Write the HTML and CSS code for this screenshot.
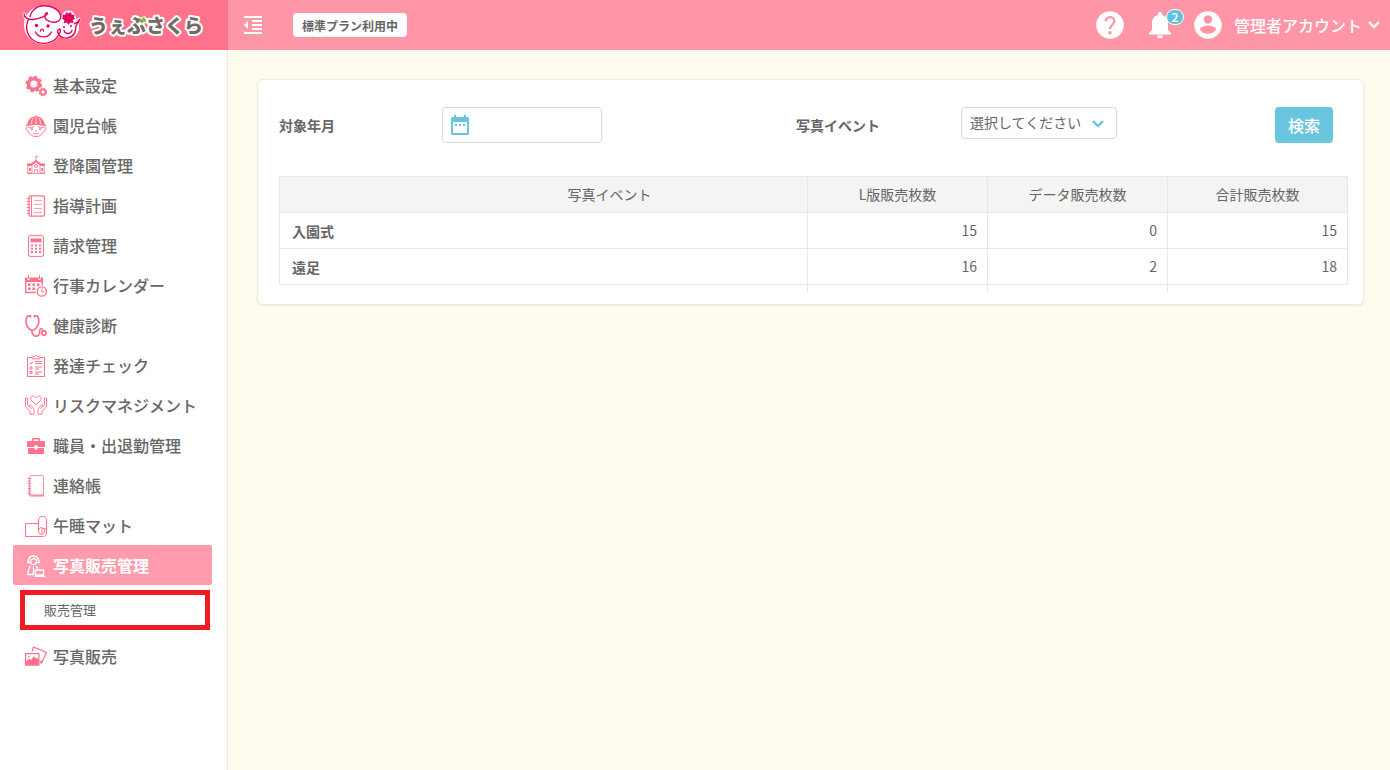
FILE: index.html
```html
<!DOCTYPE html>
<html lang="ja">
<head>
<meta charset="utf-8">
<meta name="viewport" content="width=device-width, initial-scale=1">
<title>販売管理 | うぇぶさくら</title>
<link rel="stylesheet" href="styles.css">
</head>
<body>
<header class="header">
  <a class="brand" href="#" aria-label="うぇぶさくら">
    <svg class="brand-logo" viewBox="0 0 228 50" width="228" height="50">
      <g fill="#fff" stroke="#fff" stroke-width="3" stroke-linejoin="round">
        <circle cx="43.500" cy="25" r="18"/>
        <circle cx="67.500" cy="27.500" r="10"/>
        <circle cx="68.500" cy="18" r="6"/>
        <path d="M24 14c2 4 6 6 10 5l-4 8zM79 19l-3 9-4-5z"/>
      </g>
      <g fill="none" stroke="#e2065f" stroke-width="1.400" stroke-linecap="round" stroke-linejoin="round">
        <path d="M24 14c0 3 4 6 9 5.500C39 19 47 16 47.500 13.200 47 12 44.500 13.500 45 17c.5 3.500 6 6 11 5 4-1 5.500-4 4.500-7C59 9 51 5.500 43.500 5.800 36 6 31 11 30 16.500"/>
        <path d="M28.500 19.500C25 26 26.500 35 33 40c6.500 5 17 4.500 23-1.500 5-5 5-9.500 3.500-9.500-2 .2-3 4 .5 7 4 3.400 11 2.600 14-2 2-3 1.500-6 2-8 1-2.500 3-3.500 3.500-6.500-1 2.500-3 3.500-5 4"/>
        <path d="M35.500 32c3 6.500 13 6.500 16 0M64 30.500c1.500 4 6.500 4 8 0M40.500 31c0-2.500 3-2.500 3 0"/>
      </g>
      <g fill="#e2065f">
        <circle cx="36.500" cy="25.500" r="1.700"/><circle cx="48" cy="26" r="1.700"/>
        <circle cx="64" cy="27" r="1"/><circle cx="71" cy="26" r="1"/>
        <path d="M66 12l2.500 1.500L71 12l.8 3 3-.4-.8 2.700 1.300 1.200-2.600 1.500.8 3.300-3.200-.8-1.800 2.300-1.800-2.300-3.200.8.8-3.300-2.600-1.500 1.300-1.200-.8-2.700 3 .4z"/>
      </g>
      <text class="brand-name" x="89" y="33">うぇぶさくら</text>
      <path d="M140 19l1.500 3M143.500 18l1.500 3" stroke="#7fc31c" stroke-width="2" stroke-linecap="round"/>
    </svg>
  </a>
  <button class="menu-toggle" type="button" aria-label="メニューを閉じる">
    <svg viewBox="0 0 18 18" width="18" height="18" fill="#fff"><path d="M0 0h18v2H0zM8 4h10v2H8zM8 8h10v2H8zM8 12h10v2H8zM0 16h18v2H0zM4 5v8L0 9z"/></svg>
  </button>
  <span class="plan">標準プラン利用中</span>
  <div class="header-tools">
    <button class="tool" type="button" aria-label="ヘルプ">
      <svg viewBox="0 0 28 28" width="28" height="28"><circle cx="14" cy="14" r="13.800" fill="#fff"/><path d="M9.700 10.500c0-2.600 1.900-4.300 4.300-4.300s4.300 1.700 4.300 4.100c0 3.300-4.200 3.800-4.200 7.700" fill="none" stroke="#ff96a8" stroke-width="2.300"/><circle cx="14" cy="21.800" r="1.700" fill="#ff96a8"/></svg>
    </button>
    <button class="tool bell" type="button" aria-label="お知らせ 2件">
      <svg viewBox="0 0 24 28" width="24" height="28" fill="#fff"><path d="M12 1c1.200 0 2 .9 2 2v1c3.800.9 6 4 6 8v7l3 3v1.500H1V22l3-3v-7c0-4 2.200-7.100 6-8V3c0-1.100.8-2 2-2zM9 24.500h6a3 3 0 0 1-6 0z"/></svg>
      <span class="badge">2</span>
    </button>
    <button class="account" type="button">
      <svg viewBox="0 0 28 28" width="28" height="28"><circle cx="14" cy="14" r="13.800" fill="#fff"/><circle cx="14" cy="8.500" r="4.200" fill="#ff96a8"/><path d="M5.700 18.300c2.500-5 14.100-5 16.600 0-3.500 6-13.100 6-16.600 0z" fill="#ff96a8"/></svg>
      <span class="account-name">管理者アカウント</span>
      <svg viewBox="0 0 12 8" width="12" height="8" fill="none" stroke="#fff" stroke-width="2.400"><path d="M1 1l5 5 5-5"/></svg>
    </button>
  </div>
</header>
<div class="layout">
  <nav class="sidebar">
    <ul class="menu">
      <li><a class="menu-item" href="#"><svg class="icon" viewBox="0 0 22 22"><g class="line"><circle cx="8.800" cy="9" r="5.300" stroke-width="3.400"/><circle cx="8.800" cy="9" r="7.300" stroke-width="2" stroke-dasharray="3.300 2.430"/><circle cx="18" cy="17" r="2.600" stroke-width="1.800"/><circle cx="18" cy="17" r="3.600" stroke-width="1.200" stroke-dasharray="1.700 1.130"/></g></svg>基本設定</a></li>
      <li><a class="menu-item" href="#"><svg class="icon" viewBox="0 0 22 22"><path class="fill" d="M2.500 9C3 4 6.500 1.700 10 1.500V.5h2v1c4 .2 7 3 7.500 7.500 1 .5 2 1.500 2 2.500-6-2-15-2-21 0 0-1 1-2 2-2.500z"/><path d="M8 3C6.800 5 6.500 7 6.500 9M14 3c1.200 2 1.500 4 1.500 6M11 2v7" fill="none" stroke="#fff" stroke-width=".7"/><g class="line"><path d="M2.500 12c-2 .5-2 4 .8 4.200C5 20 8 21.500 11 21.500s6-1.500 7.700-5.300c2.800-.2 2.800-3.700.8-4.200M3 12.500c3 1 5 0 6-1.500M19 12.500c-3 1-5 0-6-1.500M8 18c2 1.300 4 1.300 6 0"/></g><path class="fill" d="M6 13.500h2V15H6zM14 13.500h2V15h-2zM10 15.500h2v1h-2z"/></svg>園児台帳</a></li>
      <li><a class="menu-item" href="#"><svg class="icon" viewBox="0 0 22 22"><path class="fill" d="M10.500.5l3 1-2.300 1V5l4.800 3.500h4V11h-4.500L11 7.500 6.500 11H2V8.500h4L10.500 5z"/><g class="line"><path d="M2.800 11v7.500h16.400V11M7 11v7.500M15 11v7.500M9.500 18v-3.500h3V18" stroke-width=".8"/><circle cx="11" cy="11" r="1.500"/></g><path class="fill" d="M4 13h2v3H4zM16.200 13h2v3h-2zM2 17.500h5v1.200H2zM15 17.500h5v1.200h-5z"/></svg>登降園管理</a></li>
      <li><a class="menu-item" href="#"><svg class="icon" viewBox="0 0 22 22"><g class="line"><rect x="4" y=".8" width="15.500" height="20.400" rx="1.500" stroke-width="1.300"/><path d="M1.800 3.500h3M1.800 6.500h3M1.800 9.500h3M1.800 12.500h3M1.800 15.500h3M1.800 18.500h3M6.500 1v20"/><path d="M9 5.500h8M9 9.500h8M9 13.500h8M9 17.500h8" opacity=".65"/></g></svg>指導計画</a></li>
      <li><a class="menu-item" href="#"><svg class="icon" viewBox="0 0 22 22"><rect class="line" x="3.500" y=".6" width="15" height="20.800" rx="1.500"/><path class="fill" d="M5.500 3.500h11v3.800h-11zM6 9.500h2v2H6zM10 9.500h2v2h-2zM14 9.500h2v2h-2zM6 12.800h2v2H6zM10 12.800h2v2h-2zM14 12.800h2v2h-2zM6 16.100h2v2H6zM10 16.100h2v2h-2zM14 16.100h2v2h-2z"/></svg>請求管理</a></li>
      <li><a class="menu-item" href="#"><svg class="icon" viewBox="0 0 22 22"><path class="fill" d="M0 2.500h2.500V5h2V2.500h9V5h2V2.500H18V7H0zM3 0h1v4H3zM14 0h1v4h-1zM3 8.500h2.500V11H3zM7.500 8.500H10V11H7.500zM12 8.500h2.500V11H12zM3 12.500h2.500V15H3zM7.500 12.500H10V15H7.500z"/><g class="line"><path d="M.7 5v12.500h10M17.300 5v5.500" stroke-width="1.400"/><circle cx="16.800" cy="16.500" r="4.600" stroke-width="1.400"/><path d="M16.800 13.500v3.300h2.400"/></g></svg>行事カレンダー</a></li>
      <li><a class="menu-item" href="#"><svg class="icon" viewBox="0 0 22 22"><g class="line" stroke-width="1.700"><path d="M5.500 1.200H2.500C-.3 5 1 13.500 7 15.500 13.500 14 15.300 5 12.500 1.200H9.500M5.500 0v2.400M9.500 0v2.400M7 15.500c-.5 6 6 7.500 7.500 3 .5-2-.5-5 1.500-5s1.500 2 2 3"/><circle cx="19" cy="18" r="2.200"/></g></svg>健康診断</a></li>
      <li><a class="menu-item" href="#"><svg class="icon" viewBox="0 0 22 22"><g class="line"><path d="M7 2.500H2.500v19h17v-19H15"/><path d="M7 2.500c0-1 2-1 2.500-1 .5-1.200 2.500-1.200 3 0 .5 0 2.500 0 2.500 1v1.300H7z"/><path d="M4.800 8l1.200 1 2-2.500M5 12h2v2H5zM5 16.500h2v2H5zM10 6.500h7M10 8.500h7M10 12h7M10 14h4M10 17h7M10 19h4"/></g></svg>発達チェック</a></li>
      <li><a class="menu-item" href="#"><svg class="icon" viewBox="0 0 22 22"><g class="line" stroke-width=".9"><path d="M11 9.500C7.500 7 5.500 5 5.700 3 6 .3 9.500.2 11 2.800 12.500.2 16 .3 16.300 3c.2 2-1.800 4-5.300 6.500z"/><path d="M.5 3v9L5 16v3h4v-5L5.200 9.500 4 10.500 6.500 14M.5 3h2v7L5 12.500M21.500 3v9L17 16v3h-4v-5l3.800-4.500 1.200 1-2.500 3.500M21.500 3h-2v7L17 12.500"/></g></svg>リスクマネジメント</a></li>
      <li><a class="menu-item" href="#"><svg class="icon" viewBox="0 0 22 22"><path class="fill" d="M3 6h4V4.500C7 3.500 7.500 3 8.500 3h5c1 0 1.500.5 1.500 1.500V6h4l1 1v5h-7.500v-1.500h-3V12H2V7zM8.500 6h5V4.500h-5zM3 13h6.500v1.500h3V13H19v5.200l-.8.8H3.800L3 18.200z" fill-rule="evenodd"/></svg>職員・出退勤管理</a></li>
      <li><a class="menu-item" href="#"><svg class="icon" viewBox="0 0 22 22"><path class="line" d="M4.500 1.500l1-1h12l1 1v19H4.500z" stroke-width=".8"/><path class="line" d="M4.500 19.500h14v2h-13z" stroke-width=".7" opacity=".7"/><path class="line" d="M2.800 3.500H6M2.800 6H6M2.800 8.500H6M2.800 11H6M2.800 13.500H6M2.800 16H6M2.800 18.500H6" stroke-width="1.200"/></svg>連絡帳</a></li>
      <li><a class="menu-item" href="#"><svg class="icon" viewBox="0 0 22 22"><g class="line"><path d="M13.500 8.500H.5v13h17c2.500 0 4-1 4-3.500V5c0-5-8-5-8 0v11.500"/><path d="M13.500 16c0-4.500 6-4.500 6 0s-6 4-6 0zM17 12.800v6.500M21.500 15c-.3-1-1-1.500-2.500-1.500"/></g></svg>午睡マット</a></li>
      <li>
        <a class="menu-item is-active" href="#" aria-expanded="true"><svg class="icon" viewBox="0 0 22 22"><g class="line" stroke-width="1.400"><path d="M3 7C3.500 2.500 6 .7 8.500.7S13.500 2.500 14 7M2 7.500h3.500M11.500 7.500H15M5.500 5c2-.3 3-1 3.500-2 .5 1 1.500 1.700 2.800 2M5.500 5.500c0 5.500 6 5.500 6 0M5.500 11C3.500 13 3 16 3 19.500h6M8.500 11.500V19M11 11l2 2.500M10.500 15h8v5h-8zM9.500 21.400h10.500"/></g></svg>写真販売管理</a>
        <ul class="submenu"><li><a class="submenu-item" href="#" aria-current="page">販売管理</a></li></ul>
      </li>
      <li><a class="menu-item" href="#"><svg class="icon" viewBox="0 0 22 22"><g class="line" stroke-width="1.200"><path d="M7 5.500L8.500 1l13 5.500-5 10.500-1.500-.5"/><path d="M.6 7.600h13.300v11.600H.6z"/></g><path class="fill" d="M1 15.500l3.500-3 1.500 1.500 3-4 1.500 2.500 1.500-1 2 3V19H1zM3 10h1.500v1.500H3zM15 15l3-1-1.500 3.500z"/></svg>写真販売</a></li>
    </ul>
  </nav>
  <main class="content">
    <section class="card">
      <form class="search">
        <label class="search-label" for="month">対象年月</label>
        <div class="month-field">
          <svg class="month-icon" viewBox="0 0 18 20" width="18" height="20" fill="#69c5de"><path d="M3 0h2v2h8V0h2v2h2l1 1v16l-1 1H1l-1-1V3l1-1h2zM2 7v11h14V7zM4 9h2v2H4zM8 9h2v2H8zM12 9h2v2h-2z" fill-rule="evenodd"/></svg>
          <input class="month-input" id="month" type="text">
        </div>
        <label class="search-label" for="event">写真イベント</label>
        <div class="event-field">
          <select class="event-select" id="event"><option>選択してください</option></select>
          <svg class="event-arrow" viewBox="0 0 12 8" width="12" height="8" fill="none" stroke="#69c5de" stroke-width="2.400"><path d="M1 1l5 5 5-5"/></svg>
        </div>
        <button class="search-button" type="submit">検索</button>
      </form>
      <table class="sales">
        <thead><tr><th class="event-col" scope="col">写真イベント</th><th scope="col">L版販売枚数</th><th scope="col">データ販売枚数</th><th scope="col">合計販売枚数</th></tr></thead>
        <tbody>
          <tr><th scope="row">入園式</th><td>15</td><td>0</td><td>15</td></tr>
          <tr><th scope="row">遠足</th><td>16</td><td>2</td><td>18</td></tr>
        </tbody>
        <tfoot aria-hidden="true"><tr><td></td><td></td><td></td><td></td></tr></tfoot>
      </table>
    </section>
  </main>
</div>
</body>
</html>
```
FILE: styles.css
```css
* {
  box-sizing: border-box;
}

body {
  margin: 0;
  min-height: 100vh;
  display: flex;
  flex-direction: column;
  background: #fffbee;
  color: #666;
  font: 14px/20px "Noto Sans CJK JP", sans-serif;
}

button,
input,
select {
  font: inherit;
  color: inherit;
}

button {
  border: 0;
  padding: 0;
  background: none;
  cursor: pointer;
}

a {
  color: inherit;
  text-decoration: none;
}

ul {
  margin: 0;
  padding: 0;
  list-style: none;
}

svg {
  display: block;
  flex: none;
}

.header {
  display: flex;
  align-items: center;
  height: 50px;
  background: #ff96a8;
}

.brand {
  flex: none;
  width: 228px;
  background: #ff728b;
}

.brand-name {
  font-size: 19px;
  font-weight: 900;
  fill: #716b68;
  stroke: #fff;
  stroke-width: 4px;
  stroke-linejoin: round;
  paint-order: stroke;
}

.menu-toggle {
  margin-left: 16px;
}

.plan {
  margin-left: 31px;
  padding: 3px 9px 1px;
  border-radius: 4px;
  background: #fff;
  font-size: 12px;
  font-weight: 700;
}

.header-tools {
  display: flex;
  align-items: center;
  margin-left: auto;
  padding-right: 10px;
}

.bell {
  position: relative;
  margin: 0 22px 0 24px;
}

.badge {
  position: absolute;
  top: -2px;
  right: -12px;
  width: 18px;
  height: 16px;
  border: 1px solid #fff;
  border-radius: 8px;
  background: #5fc3dd;
  color: #fff;
  font-size: 12px;
  font-weight: 500;
  line-height: 14px;
}

.account {
  display: flex;
  align-items: center;
  color: #fff;
  font-size: 16px;
}

.account-name {
  margin: 0 6px 0 12px;
  font-weight: 500;
}

.layout {
  display: flex;
  flex: 1;
}

.sidebar {
  flex: none;
  width: 228px;
  padding: 15px 15px 15px 13px;
  border-right: 1px solid #eee9e0;
  background: #fff;
}

.menu-item {
  display: flex;
  align-items: center;
  gap: 6px;
  height: 40px;
  padding-left: 12px;
  border-radius: 2px;
  font-size: 16px;
  font-weight: 500;
}

.menu-item.is-active {
  background: #ff9bac;
  color: #fff;
  font-weight: 700;
}

.icon {
  width: 22px;
  height: 22px;
  margin-top: 2px;
  color: #ff728b;
}

.is-active .icon {
  color: #fff;
}

.icon .fill {
  fill: currentColor;
}

.icon .line {
  fill: none;
  stroke: currentColor;
}

.submenu {
  position: relative;
  margin: 5px 2px 6px 7px;
}

.submenu::before {
  content: "";
  position: absolute;
  top: -3px;
  left: 3px;
  width: 1px;
  height: 3px;
  background: #ddd;
}

.submenu-item {
  display: flex;
  align-items: center;
  height: 40px;
  padding-left: 19px;
  border: 5px solid #ed1c24;
  font-size: 13px;
}

.content {
  flex: 1;
  min-width: 0;
  padding: 29px 26px 29px 29px;
}

.card {
  padding: 27px 15px 11px 21px;
  border: 1px solid #efebe0;
  border-radius: 6px;
  background: #fff;
  box-shadow: 0 1px 2px rgba(0, 0, 0, 0.08);
}

.search {
  display: grid;
  grid-template-columns: 163fr 354fr 165fr 314fr 58px;
  align-items: start;
  margin-right: 15px;
}

.search-label {
  font-weight: 700;
  line-height: 36px;
}

.month-field,
.event-field {
  position: relative;
}

.month-field {
  width: 160px;
}

.month-icon {
  position: absolute;
  top: 8px;
  left: 9px;
}

.month-input {
  display: block;
  width: 100%;
  height: 36px;
  padding: 0 8px 0 34px;
  border: 1px solid #d9d9d9;
  border-radius: 4px;
  background: none;
}

.event-field {
  width: 156px;
}

.event-select {
  display: block;
  width: 100%;
  height: 32px;
  padding: 0 28px 3px 8px;
  border: 1px solid #d9d9d9;
  border-radius: 4px;
  background: #fff;
  appearance: none;
}

.event-arrow {
  position: absolute;
  top: 13px;
  right: 13px;
  pointer-events: none;
}

.search-button {
  height: 36px;
  border-radius: 4px;
  background: #69c5de;
  color: #fff;
  font-size: 16px;
  font-weight: 500;
}

.sales {
  width: 100%;
  margin-top: 33px;
  border-collapse: collapse;
  table-layout: fixed;
}

.sales th,
.sales td {
  width: 180px;
  height: 36px;
  padding: 0 10px 1px;
  border: 1px solid #e8e8e8;
  text-align: right;
}

.sales thead th {
  padding-bottom: 2px;
  background: #f4f4f4;
  font-weight: 400;
  text-align: center;
}

.sales .event-col {
  width: auto;
  padding-left: 142px;
}

.sales tbody th {
  padding: 0 12px;
  font-weight: 700;
  text-align: left;
}

.sales tfoot td {
  height: 8px;
  padding: 0;
  border-bottom: 0;
}

.sales tfoot td:first-child {
  border-left: 0;
}

.sales tfoot td:last-child {
  border-right: 0;
}
```
